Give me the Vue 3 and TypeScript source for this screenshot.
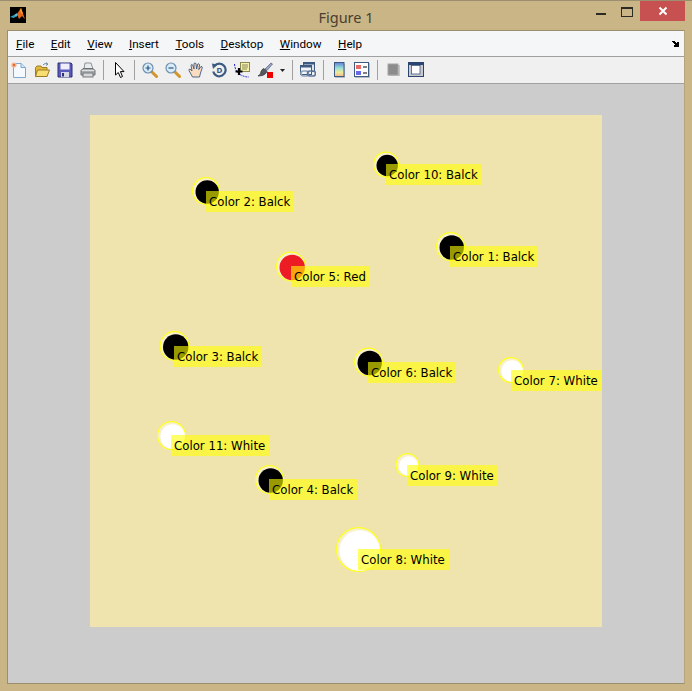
<template>
  <div class="window">
    <header class="titlebar">
      <svg class="app-icon" width="16" height="16" viewBox="0 0 16 16">
        <rect width="16" height="16" fill="#000" />
        <path d="M0 10 L4 8 L6 9 L4 11 Z" fill="#2f9fc4" />
        <path d="M4 8 L7 6 L8 8 L6 10 Z" fill="#4fc0d8" />
        <path d="M7 7 L11 1 L15 12 L12 9 L9 12 Z" fill="#e8641b" />
        <path d="M10 3 L11 1 L13 7 L11 6 Z" fill="#f5a623" />
      </svg>
      <span class="title">Figure 1</span>
      <div class="caption-buttons">
        <span class="minimize"></span>
        <span class="maximize"></span>
        <span class="close">
          <svg width="10" height="10" viewBox="0 0 10 10">
            <path d="M1.5 1.5 L8.5 8.5 M8.5 1.5 L1.5 8.5" stroke="#fff" stroke-width="2" />
          </svg>
        </span>
      </div>
    </header>

    <div class="client">
      <nav class="menubar">
        <span v-for="m in menus" :key="m" class="menu-item"><u>{{ m[0] }}</u>{{ m.slice(1) }}</span>
        <svg class="dock-arrow" width="8" height="6" viewBox="0 0 8 6">
          <path d="M0 0 H3 V1 H4 V2 H5 V1 H7 V6 H2 V4 H3 V3 H2 V2 H1 V1 H0 Z" fill="#000" />
        </svg>
      </nav>

      <div class="toolbar">
        <!-- new -->
        <svg class="tool" viewBox="0 0 16 16">
          <path d="M2.5 1.5 H10 L14.5 5.5 V15.5 H2.5 Z" fill="#f4f9fe" stroke="#7fa8d0" />
          <path d="M10 1.5 V5.5 H14.5" fill="#d4e4f4" stroke="#7fa8d0" />
          <circle cx="3" cy="3" r="2.6" fill="#f3b08a" />
          <circle cx="3" cy="3" r="1.1" fill="#e2561f" />
        </svg>
        <!-- open -->
        <svg class="tool" viewBox="0 0 16 16">
          <path d="M1.5 14.5 V5.5 L3 4 H7 L8 5.5 H13 V14.5 Z" fill="#e2b83e" stroke="#9c7c20" />
          <path d="M1.5 14.5 L3.5 8 H15.5 L13 14.5 Z" fill="#f8dc74" stroke="#9c7c20" />
          <path d="M9 3 Q11 0.5 13.5 2 M12 0.5 L14 2.2 L12 3.5" fill="none" stroke="#6f87a8" />
        </svg>
        <!-- save -->
        <svg class="tool" viewBox="0 0 16 16">
          <path d="M1 1 H14 L15 2 V15 H1 Z" fill="#5a5ab8" stroke="#2f2f7c" />
          <rect x="3.5" y="1.5" width="9" height="6" fill="#eeeefc" />
          <rect x="4" y="10" width="8" height="5" fill="#d8d8e4" />
          <rect x="5" y="11" width="2" height="3.5" fill="#2f2f7c" />
        </svg>
        <!-- print -->
        <svg class="tool" viewBox="0 0 16 16">
          <path d="M4 7 L5 1 H11 L13 7 Z" fill="#e8ecef" stroke="#8c9499" />
          <path d="M1 8.5 L3 6.5 H13 L15 8.5 V13 H1 Z" fill="#a9adb0" stroke="#6c7074" />
          <rect x="3" y="11" width="10" height="4" fill="#d6d8da" stroke="#74787c" />
          <rect x="2" y="8" width="12" height="1" fill="#dfe1e3" />
        </svg>
        <i class="sep"></i>
        <!-- pointer -->
        <svg class="tool" viewBox="0 0 16 16">
          <path d="M4.5 0.5 V13 L7.3 10.5 L9.5 15.5 L11.5 14.5 L9.4 9.6 H13 Z" fill="#fff" stroke="#000" />
        </svg>
        <i class="sep"></i>
        <!-- zoom in -->
        <svg class="tool" viewBox="0 0 16 16">
          <path d="M9.5 9.5 L14.5 14.5" stroke="#d4942a" stroke-width="3" stroke-linecap="round" />
          <circle cx="6" cy="6" r="5" fill="#d8ecf8" stroke="#6d8fb0" stroke-width="1.2" />
          <path d="M3.5 6 H8.5 M6 3.5 V8.5" stroke="#2b4e83" stroke-width="1.2" />
        </svg>
        <!-- zoom out -->
        <svg class="tool" viewBox="0 0 16 16">
          <path d="M9.5 9.5 L14.5 14.5" stroke="#d4942a" stroke-width="3" stroke-linecap="round" />
          <circle cx="6" cy="6" r="5" fill="#d8ecf8" stroke="#6d8fb0" stroke-width="1.2" />
          <path d="M3.5 6 H8.5" stroke="#2b4e83" stroke-width="1.2" />
        </svg>
        <!-- pan -->
        <svg class="tool" viewBox="0 0 16 16">
          <path d="M4.5 15 L1 8.5 Q0.5 7 2 7 L4 9 L3 3 Q3.5 1.7 4.7 3 L6 7 L6 1.6 Q7 0.3 8 1.6 L8.6 7 L9.8 2 Q11 1.2 11.6 2.6 L10.8 7.6 L13 4.4 Q14.6 4.4 14.2 6 L12.5 11 L11.5 15 Z" fill="#fbdcc0" stroke="#3d5a80" stroke-width="0.9" />
        </svg>
        <!-- rotate -->
        <svg class="tool" viewBox="0 0 16 16">
          <path d="M3.4 4 A6.3 6.3 0 1 1 2.2 9.5" fill="none" stroke="#3d5a80" stroke-width="2.2" />
          <path d="M1 1.5 L6.5 2.5 L2 7 Z" fill="#3d5a80" />
          <text x="8.5" y="11" class="rotate-mark">D</text>
        </svg>
        <!-- data cursor -->
        <svg class="tool" viewBox="0 0 16 16">
          <path d="M0.5 2 Q1 9 6 12.5 Q10 15 15 15" fill="none" stroke="#2020d0" stroke-dasharray="2 1" />
          <rect x="6.5" y="0.5" width="9" height="9" fill="#f6efb0" stroke="#8a8a50" />
          <path d="M8 3 H14 M8 5 H14 M8 7 H13" stroke="#8a8a50" />
          <path d="M5 6 V13 M1.5 9.5 H8.5" stroke="#000" stroke-width="2.2" />
        </svg>
        <!-- brush -->
        <svg class="tool" viewBox="0 0 16 16">
          <path d="M8 7 L14 1 L15.5 2 L10 8.5 Z" fill="#9aa8c4" stroke="#4c5c80" stroke-width="0.7" />
          <path d="M7 6.5 L10 9.5 Q8 14 1 14 Q4 12.5 4 9.5 Q5 7 7 6.5 Z" fill="#55595e" stroke="#2c2e30" stroke-width="0.7" />
          <rect x="10" y="10" width="6" height="6" fill="#ee0000" />
        </svg>
        <svg class="drop" width="5" height="16" viewBox="0 0 5 16"><path d="M0 7 H5 L2.5 10 Z" fill="#222" /></svg>
        <i class="sep"></i>
        <!-- link -->
        <svg class="tool" viewBox="0 0 16 16">
          <rect x="3.5" y="0.5" width="11" height="9" fill="#dfe6ee" stroke="#3d5a80" />
          <rect x="3.5" y="0.5" width="11" height="2" fill="#3d5a80" />
          <rect x="0.5" y="3.5" width="11" height="9" fill="#f4f6f9" stroke="#3d5a80" />
          <rect x="0.5" y="3.5" width="11" height="2" fill="#3d5a80" />
          <rect x="1" y="9" width="7.5" height="5" rx="2.5" fill="none" stroke="#8fa3bc" stroke-width="1.6" />
          <rect x="7.5" y="9" width="8" height="5" rx="2.5" fill="none" stroke="#5c7699" stroke-width="1.6" />
        </svg>
        <i class="sep"></i>
        <!-- colorbar -->
        <svg class="tool" viewBox="0 0 16 16">
          <defs>
            <linearGradient id="cbar" x1="0" y1="0" x2="0" y2="1">
              <stop offset="0" stop-color="#5f7fd8" />
              <stop offset="0.4" stop-color="#98e0d8" />
              <stop offset="0.7" stop-color="#ecec98" />
              <stop offset="1" stop-color="#f6b890" />
            </linearGradient>
          </defs>
          <rect x="4" y="2" width="10" height="14" fill="#b8bcc4" />
          <rect x="3.5" y="0.5" width="9.5" height="14" fill="url(#cbar)" stroke="#3d5a80" />
        </svg>
        <!-- legend -->
        <svg class="tool" viewBox="0 0 16 16">
          <rect x="1" y="1" width="15" height="15" fill="#b8bcc4" />
          <rect x="0.5" y="0.5" width="14" height="14" fill="#fff" stroke="#3d5a80" />
          <rect x="2" y="3" width="5" height="4" fill="#e86868" />
          <rect x="2" y="9" width="5" height="4" fill="#6868e8" />
          <path d="M9 5 H13 M9 11 H13" stroke="#000" />
        </svg>
        <i class="sep"></i>
        <!-- hide plot tools -->
        <svg class="tool" viewBox="0 0 16 16">
          <rect x="4" y="3" width="11" height="11" fill="#c4c4c4" />
          <rect x="3" y="2" width="10" height="11" fill="#8c8c8c" stroke="#a4a4a4" />
        </svg>
        <!-- show plot tools -->
        <svg class="tool" viewBox="0 0 16 16">
          <rect x="0.5" y="0.5" width="15" height="14" fill="#c8cad0" stroke="#2c4470" />
          <rect x="0.5" y="0.5" width="15" height="2.5" fill="#2c4470" />
          <rect x="3.5" y="3.5" width="8.5" height="8.5" fill="#fff" stroke="#2c4470" stroke-width="0.7" />
        </svg>
      </div>

      <main class="canvas">
        <div class="axes">
          <svg class="markers" width="512" height="512" viewBox="0 0 512 512">
            <g v-for="p in points" :key="p.label">
              <circle :cx="p.cx - 90" :cy="p.cy - 115" :r="p.r - 0.6" fill="#f6f0cf" stroke="#ffff20" stroke-width="1.2" />
              <circle :cx="p.cx - 90 + 1.2" :cy="p.cy - 115 + 1" :r="p.r - 2.3" :fill="p.fill" />
            </g>
          </svg>
          <span
            v-for="p in points"
            :key="p.label"
            class="label"
            :style="{ left: p.x - 90 + 'px', top: p.y - 115 + 'px' }"
          >{{ p.label }}</span>
        </div>
      </main>
    </div>
  </div>
</template>

<script setup lang="ts">
interface Point {
  label: string;
  x: number;
  y: number;
  cx: number;
  cy: number;
  r: number;
  fill: string;
}

const menus = ['File', 'Edit', 'View', 'Insert', 'Tools', 'Desktop', 'Window', 'Help'];

// x, y: label corner, cx, cy: marker centre (figure pixels)
const points: Point[] = [
  { label: 'Color 10: Balck', x: 386, y: 164, cx: 386, cy: 164.5, r: 13, fill: '#000' },
  { label: 'Color 2: Balck', x: 206, y: 191, cx: 206, cy: 191, r: 14, fill: '#000' },
  { label: 'Color 1: Balck', x: 450, y: 246, cx: 450.5, cy: 246.5, r: 14.5, fill: '#000' },
  { label: 'Color 5: Red', x: 291, y: 266, cx: 291, cy: 266.5, r: 15, fill: '#ed1c24' },
  { label: 'Color 3: Balck', x: 174, y: 346, cx: 174.5, cy: 346, r: 15, fill: '#000' },
  { label: 'Color 6: Balck', x: 368, y: 362, cx: 368.5, cy: 362, r: 14.5, fill: '#000' },
  { label: 'Color 7: White', x: 511, y: 370, cx: 511, cy: 370, r: 13, fill: '#fff' },
  { label: 'Color 11: White', x: 171, y: 435, cx: 171.5, cy: 435.5, r: 14.5, fill: '#fff' },
  { label: 'Color 9: White', x: 407, y: 465, cx: 407.5, cy: 465, r: 12, fill: '#fff' },
  { label: 'Color 4: Balck', x: 269, y: 479, cx: 269.5, cy: 479.5, r: 14.5, fill: '#000' },
  { label: 'Color 8: White', x: 358, y: 549, cx: 358.5, cy: 549.5, r: 22.5, fill: '#fff' },
];
</script>

<style>
html,
body {
  margin: 0;
  background: #c9b484;
}
</style>

<style scoped>
.window {
  width: 692px;
  height: 691px;
  box-sizing: border-box;
  display: flex;
  flex-direction: column;
  background: #cab586;
  border-top: 1px solid #9c8f6f;
  font-family: "Noto Sans", sans-serif;
}
.titlebar {
  height: 29px;
  flex: none;
  display: flex;
  align-items: flex-start;
  position: relative;
  padding-left: 10px;
}
.app-icon {
  margin-top: 6px;
}
.title {
  position: absolute;
  left: 0;
  right: 0;
  top: 6px;
  text-align: center;
  font-size: 14.5px;
  line-height: 20px;
  color: #474031;
}
.caption-buttons {
  position: absolute;
  top: 0;
  right: 7px;
  display: flex;
  align-items: flex-start;
}
.minimize {
  width: 10px;
  height: 2px;
  background: #2c2a25;
  margin-top: 12px;
}
.maximize {
  width: 10px;
  height: 7px;
  border: 1px solid #2c2a25;
  border-top-width: 2px;
  margin: 6px 7px 0 15px;
}
.close {
  width: 45px;
  height: 20px;
  background: #c75050;
  display: flex;
  align-items: center;
  justify-content: center;
}
.client {
  flex: 1;
  margin: 0 7px 7px;
  border: 1px solid #9c8f6f;
  border-right-color: #b5a47c;
  display: flex;
  flex-direction: column;
  min-height: 0;
}
.menubar {
  height: 25px;
  flex: none;
  display: flex;
  align-items: center;
  gap: 16.5px;
  padding-left: 8px;
  background: #f5f6f7;
  border-bottom: 1px solid #a0a0a0;
  font-family: Roboto, sans-serif;
  font-size: 11.7px;
  color: #000;
  position: relative;
}
.menu-item {
  line-height: 16px;
}
.dock-arrow {
  position: absolute;
  right: 4px;
  top: 10px;
}
.toolbar {
  height: 26px;
  flex: none;
  display: flex;
  align-items: center;
  gap: 7px;
  padding-left: 3px;
  background: #f0f0f0;
  border-bottom: 1px solid #a0a0a0;
}
.tool {
  width: 16px;
  height: 16px;
  flex: none;
}
.drop {
  flex: none;
}
.sep {
  width: 1px;
  height: 20px;
  background: #a0a0a0;
  flex: none;
}
.rotate-mark {
  font-family: "DejaVu Sans", sans-serif;
  font-size: 7px;
  font-weight: 700;
  fill: #3d5a80;
  text-anchor: middle;
}
.canvas {
  flex: 1;
  min-height: 0;
  background: #cccccc;
  padding: 31px 82px 0;
}
.axes {
  width: 512px;
  height: 512px;
  position: relative;
  background: #efe4ae;
}
.markers {
  position: absolute;
  left: 0;
  top: 0;
}
.label {
  position: absolute;
  height: 20px;
  line-height: 21px;
  padding: 1px 4px 0 3px;
  white-space: nowrap;
  background: rgba(255, 255, 0, 0.6);
  color: #000;
  font-family: "DejaVu Sans", sans-serif;
  font-size: 11.75px;
}
</style>
